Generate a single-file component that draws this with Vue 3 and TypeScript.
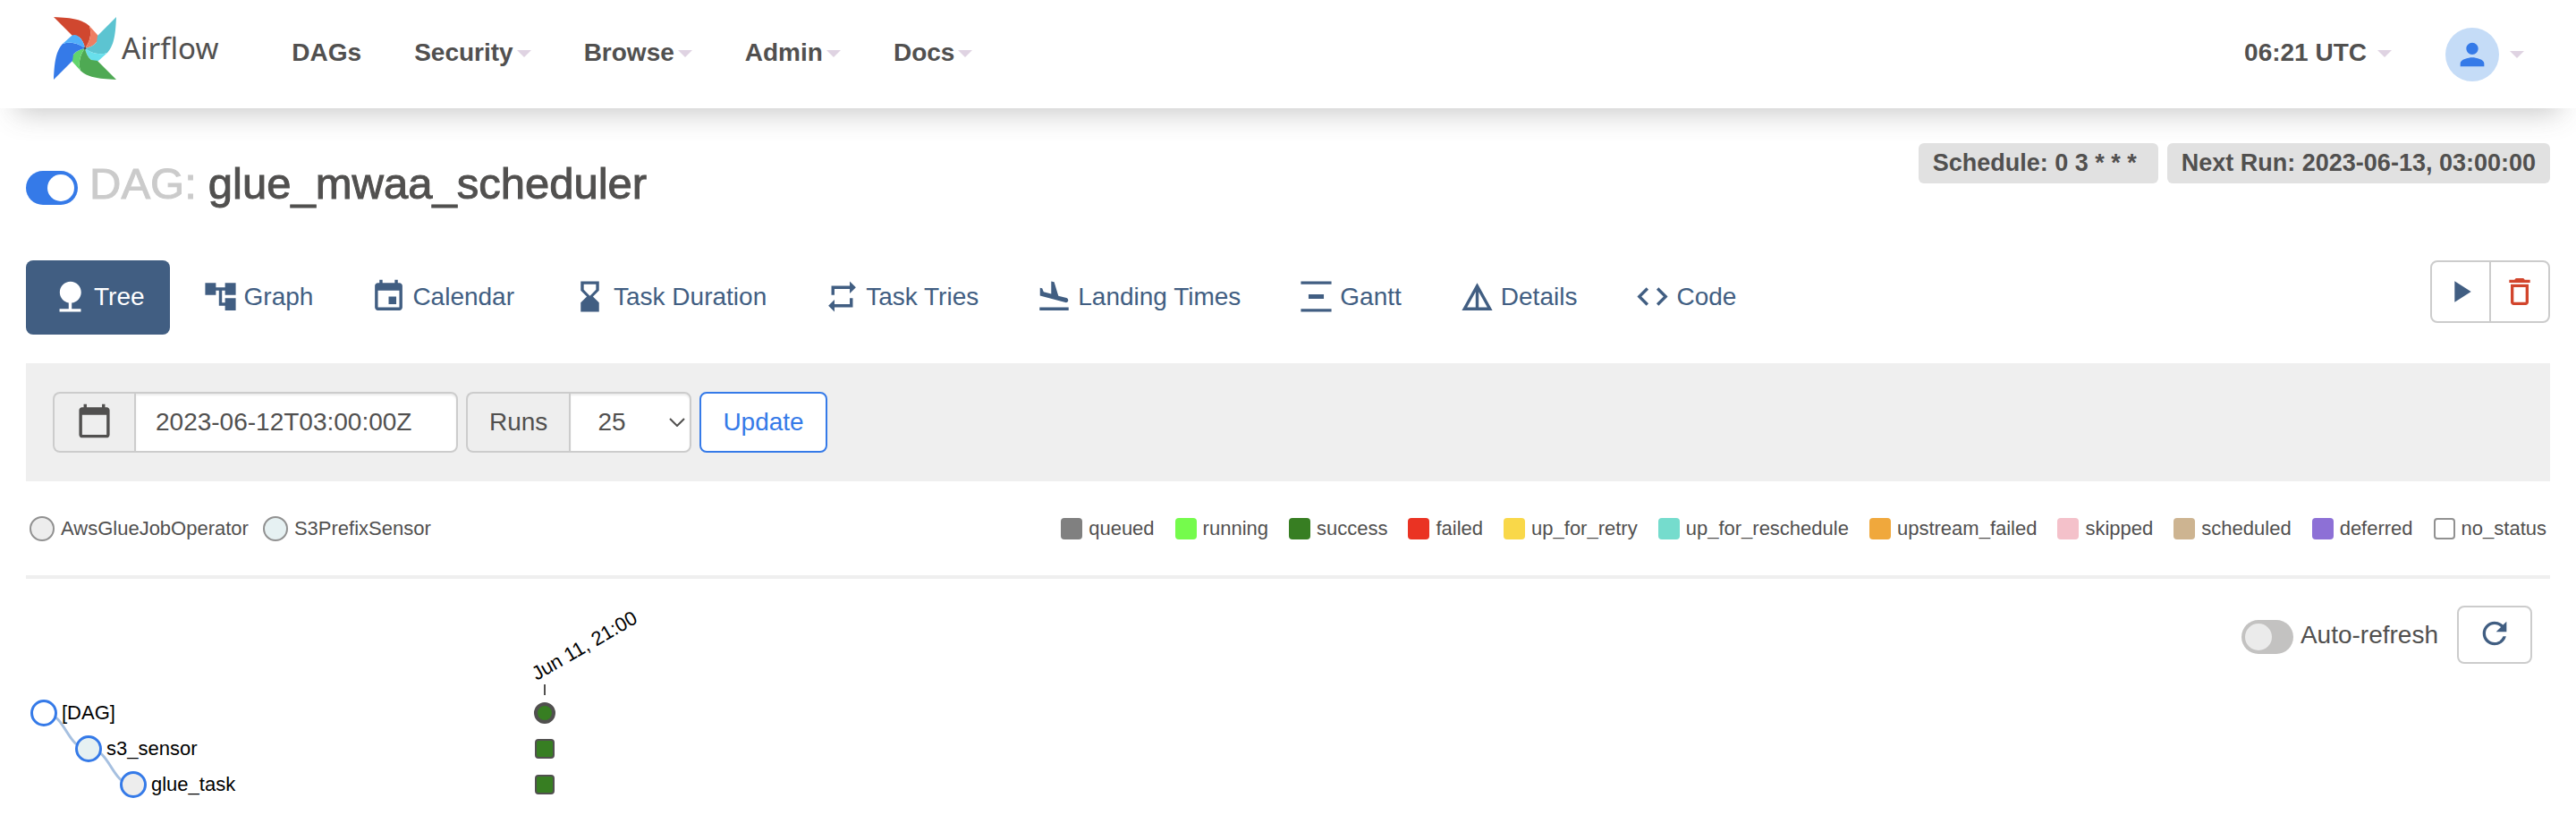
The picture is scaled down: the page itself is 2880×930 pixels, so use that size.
<script setup lang="ts">
import { ref } from 'vue'

interface Tab {
  label: string
  path: string
}

const menus = ['Security', 'Browse', 'Admin', 'Docs']

const blades = [
  { dark: '#d0472f', light: '#ee7e62', turn: 'rotate(0 35 35)' },
  { dark: '#5cc4d1', light: '#68dfec', turn: 'rotate(90 35 35)' },
  { dark: '#4ea953', light: '#62d46c', turn: 'rotate(180 35 35)' },
  { dark: '#357ae8', light: '#52b0fa', turn: 'rotate(270 35 35)' },
]

const tabs: Tab[] = [
  { label: 'Tree', path: 'M13 16.12c3.47-.41 6.17-3.36 6.17-6.95 0-3.87-3.13-7-7-7s-7 3.13-7 7c0 3.47 2.52 6.34 5.83 6.89V20H5v2h14v-2h-6v-3.88z' },
  { label: 'Graph', path: 'M22 11V3h-7v3H9V3H2v8h7V8h2v10h4v3h7v-8h-7v3h-2V8h2v3z' },
  { label: 'Calendar', path: 'M17 12h-5v5h5v-5zM16 1v2H8V1H6v2H5c-1.11 0-1.99.9-1.99 2L3 19c0 1.1.89 2 2 2h14c1.1 0 2-.9 2-2V5c0-1.100-.9-2-2-2h-1V1h-2zm3 18H5V8h14v11z' },
  { label: 'Task Duration', path: 'M18 22l-.01-6L14 12l3.990-4.010L18 2H6v6l4 4-4 3.990V22h12zM8 7.500V4h8v3.500l-4 4-4-4z' },
  { label: 'Task Tries', path: 'M7 7h10v3l4-4-4-4v3H5v6h2V7zm10 10H7v-3l-4 4 4 4v-3h12v-6h-2v4z' },
  { label: 'Landing Times', path: 'M2.500 19h19v2h-19v-2zm16.840-3.150c.8.210 1.620-.26 1.840-1.060.21-.8-.26-1.620-1.060-1.840l-5.310-1.420-2.760-9.020L10.120 2v8.280L5.150 8.950l-.93-2.320-1.450-.39v5.170l16.570 4.440z' },
  { label: 'Gantt', path: 'M22 2v2H2V2h20zM7 10.500v3h10v-3H7zM2 20v2h20v-2H2z' },
  { label: 'Details', path: 'M12 3L2 21h20L12 3zm1 5.920L18.600 19H13V8.920zm-2 0V19H5.400L11 8.920z' },
  { label: 'Code', path: 'M9.400 16.600L4.800 12l4.600-4.600L8 6l-6 6 6 6 1.400-1.400zm5.200 0l4.600-4.600-4.600-4.600L16 6l6 6-6 6-1.400-1.400z' },
]

const operators = [
  { name: 'AwsGlueJobOperator', cls: 'glue' },
  { name: 'S3PrefixSensor', cls: 'sensor' },
]

const states = [
  'queued', 'running', 'success', 'failed', 'up_for_retry', 'up_for_reschedule',
  'upstream_failed', 'skipped', 'scheduled', 'deferred', 'no_status',
]

const dagOn = ref(true)
const autoRefresh = ref(false)
const baseDate = ref('2023-06-12T03:00:00Z')
const runs = ref('25')
</script>

<template>
  <div class="page">
    <header class="navbar">
      <a href="#" class="brand">
        <svg class="pinwheel" viewBox="0 0 70 70" aria-hidden="true">
          <g v-for="b in blades" :key="b.dark" :transform="b.turn">
            <path :fill="b.dark" d="M0 0C22 1 32 3 40 10C43 19 40 29 35 35C34 30 32 25 28 22L21 21Z" />
            <path :fill="b.light" d="M40 10L49 20C51 23 50 26 48 28C45 32 40 34 35 35C40 29 43 19 40 10Z" />
          </g>
          <circle cx="35" cy="35" r="1.400" fill="#51504f" />
        </svg>
        <span class="brand-name">Airflow</span>
      </a>
      <nav class="menu">
        <a href="#" class="menu-item">DAGs</a>
        <a v-for="m in menus" :key="m" href="#" class="menu-item">{{ m }}<span class="caret"></span></a>
      </nav>
      <div class="right-menu">
        <a href="#" class="clock">06:21 UTC<span class="caret"></span></a>
        <a href="#" class="user" aria-label="User menu">
          <span class="avatar">
            <svg viewBox="0 0 24 24" aria-hidden="true"><path d="M12 12c2.210 0 4-1.790 4-4s-1.790-4-4-4-4 1.790-4 4 1.790 4 4 4zm0 2c-2.670 0-8 1.340-8 4v2h16v-2c0-2.660-5.330-4-8-4z" /></svg>
          </span>
          <span class="caret"></span>
        </a>
      </div>
    </header>

    <main>
      <section class="heading">
        <h1>
          <input v-model="dagOn" type="checkbox" class="switch" aria-label="Pause or unpause DAG">
          <span class="muted">DAG:</span>
          <span>glue_mwaa_scheduler</span>
        </h1>
        <div class="labels">
          <a href="#" class="label schedule">Schedule: 0 3 * * *</a>
          <span class="label">Next Run: 2023-06-13, 03:00:00</span>
        </div>
      </section>

      <section class="tab-row">
        <nav class="tabs">
          <a v-for="(t, i) in tabs" :key="t.label" href="#" class="tab" :class="{ active: i === 0 }">
            <svg viewBox="0 0 24 24" aria-hidden="true"><path :d="t.path" /></svg>{{ t.label }}
          </a>
        </nav>
        <div class="actions">
          <button type="button" aria-label="Trigger DAG">
            <svg viewBox="0 0 24 24" aria-hidden="true"><path d="M8 5v14l11-7z" /></svg>
          </button>
          <button type="button" class="danger" aria-label="Delete DAG">
            <svg viewBox="0 0 24 24" aria-hidden="true"><path d="M6 19c0 1.100.9 2 2 2h8c1.100 0 2-.9 2-2V7H6v12zM8 9h8v10H8V9zm7.500-5l-1-1h-5l-1 1H5v2h14V4h-3.500z" /></svg>
          </button>
        </div>
      </section>

      <form class="filter" @submit.prevent>
        <div class="group">
          <label for="base-date" class="addon" aria-label="Base date">
            <svg viewBox="0 0 24 24" aria-hidden="true"><path d="M20 3h-1V1h-2v2H7V1H5v2H4c-1.100 0-2 .9-2 2v16c0 1.100.9 2 2 2h16c1.100 0 2-.9 2-2V5c0-1.100-.9-2-2-2zm0 18H4V8h16v13z" /></svg>
          </label>
          <input id="base-date" v-model="baseDate" type="text" class="field date">
        </div>
        <div class="group">
          <label for="num-runs" class="addon">Runs</label>
          <div class="select-wrap">
            <select id="num-runs" v-model="runs" class="field">
              <option>5</option>
              <option>25</option>
              <option>50</option>
              <option>100</option>
            </select>
            <svg class="chevron" viewBox="0 0 18 10" aria-hidden="true"><path d="M1 1l8 8 8-8" /></svg>
          </div>
        </div>
        <button type="submit" class="update">Update</button>
      </form>

      <section class="legend">
        <ul class="operators">
          <li v-for="o in operators" :key="o.name"><span class="dot" :class="o.cls"></span>{{ o.name }}</li>
        </ul>
        <ul class="states">
          <li v-for="s in states" :key="s"><span class="swatch" :class="s"></span>{{ s }}</li>
        </ul>
      </section>

      <hr>

      <section class="board">
        <svg class="tree" width="760" height="232" viewBox="0 0 760 232" role="img" aria-label="DAG runs tree">
          <g class="links">
            <path d="M20 129C45 129 45 169 70 169" />
            <path d="M70 169C95 169 95 209 120 209" />
          </g>
          <g class="nodes">
            <circle cx="20" cy="129" r="13.500" fill="#fff" />
            <circle cx="70" cy="169" r="13.500" fill="#e6f1f2" />
            <circle cx="120" cy="209" r="13.500" fill="#ededed" />
          </g>
          <text x="40" y="136">[DAG]</text>
          <text x="90" y="176">s3_sensor</text>
          <text x="140" y="216">glue_task</text>
          <text transform="translate(571 93) rotate(-30)">Jun 11, 21:00</text>
          <path class="tick" d="M580 97v12" />
          <circle class="run" cx="580" cy="129" r="10" />
          <rect class="task" x="570" y="159" width="20" height="20" rx="3" />
          <rect class="task" x="570" y="199" width="20" height="20" rx="3" />
        </svg>
        <div class="refresh">
          <label class="auto"><input v-model="autoRefresh" type="checkbox" class="switch">Auto-refresh</label>
          <button type="button" aria-label="Refresh">
            <svg viewBox="0 0 24 24" aria-hidden="true"><path d="M17.650 6.350C16.200 4.900 14.210 4 12 4c-4.420 0-7.990 3.580-7.990 8s3.570 8 7.990 8c3.730 0 6.840-2.550 7.730-6h-2.080c-.82 2.330-3.040 4-5.650 4-3.310 0-6-2.690-6-6s2.690-6 6-6c1.660 0 3.140.69 4.220 1.780L13 11h7V4l-2.350 2.350z" /></svg>
          </button>
        </div>
      </section>
    </main>
  </div>
</template>

<style>
body {
  margin: 0;
  background: #fff;
}
</style>

<style scoped>
.page {
  font-family: "Liberation Sans", Arial, Helvetica, sans-serif;
  font-size: 28px;
  line-height: 40px;
  color: #51504f;
}

.page *,
.page *::before {
  box-sizing: border-box;
}

a {
  color: inherit;
  text-decoration: none;
}

svg {
  display: block;
  fill: currentColor;
}

button,
input,
select {
  font: inherit;
  color: inherit;
  margin: 0;
}

ul {
  display: flex;
  list-style: none;
  margin: 0;
  padding: 0;
}

.navbar {
  display: flex;
  align-items: center;
  height: 121px;
  padding: 0 58px 0 60px;
  background: #fff;
  box-shadow: 0 24px 30px -18px rgba(81, 80, 79, 0.3);
}

.brand {
  display: flex;
  align-items: center;
  gap: 6px;
  margin: 0 53px 14px 0;
}

.pinwheel {
  width: 70px;
  height: 70px;
}

.brand-name {
  font-family: "Noto Sans", "Open Sans", sans-serif;
  font-size: 33px;
}

.menu {
  display: flex;
  margin-bottom: 4px;
  font-weight: 700;
}

.menu-item {
  padding: 0 30px 0 29px;
}

.caret {
  display: inline-block;
  margin-left: 4px;
  vertical-align: middle;
  border: 8px solid transparent;
  border-top-color: #dfd3e2;
  border-bottom-width: 0;
}

.right-menu {
  display: flex;
  align-items: center;
  gap: 60px;
  margin-left: auto;
  font-weight: 700;
}

.right-menu .caret {
  margin-left: 12px;
}

.clock {
  margin-bottom: 4px;
}

.user {
  display: flex;
  align-items: center;
}

.avatar {
  display: grid;
  place-items: center;
  width: 60px;
  height: 60px;
  border-radius: 50%;
  background: #c5dcf7;
  color: #357ae8;
}

.avatar svg {
  width: 40px;
  height: 40px;
}

main {
  padding: 39px 29px 0;
}

.heading {
  display: flex;
  justify-content: space-between;
  align-items: flex-start;
}

h1 {
  display: flex;
  align-items: center;
  gap: 13px;
  margin: 22px 0 0;
  font-size: 49px;
  font-weight: 400;
  line-height: 46px;
  -webkit-text-stroke: 1px currentColor;
}

h1 span {
  padding-bottom: 10px;
}

.muted {
  color: #cbcbcb;
}

.switch {
  appearance: none;
  display: flex;
  align-items: center;
  flex: none;
  width: 58px;
  height: 38px;
  padding: 4px;
  border-radius: 19px;
  background: #c3c2c1;
}

.switch::before {
  content: "";
  width: 30px;
  height: 30px;
  border-radius: 50%;
  background: #ebebeb;
}

.switch:checked {
  justify-content: flex-end;
  background: #357ae8;
}

.switch:checked::before {
  background: #fff;
}

.labels {
  display: flex;
  gap: 10px;
}

.label {
  padding: 0 16px;
  border-radius: 6px;
  background: #e1e1e1;
  font-size: 27px;
  font-weight: 700;
  line-height: 45px;
}

.schedule {
  padding-right: 24px;
}

.tab-row {
  display: flex;
  justify-content: space-between;
  align-items: flex-start;
  margin-top: 53px;
}

.tabs {
  display: flex;
  gap: 7px;
}

.tab {
  display: flex;
  align-items: center;
  gap: 6px;
  padding: 20px 28px 22px 29px;
  border-radius: 8px;
  color: #415e82;
}

.tab svg {
  width: 41px;
  height: 41px;
}

.tab.active {
  background: #415e82;
  color: #fff;
}

.actions {
  display: flex;
}

button {
  border: 2px solid #ccc;
  border-radius: 8px;
  background: #fff;
  color: #415e82;
}

.actions button {
  width: 68px;
  height: 70px;
  padding: 0 12px;
}

.actions button:first-child {
  border-radius: 8px 0 0 8px;
}

.actions button:last-child {
  margin-left: -2px;
  border-radius: 0 8px 8px 0;
}

.actions svg,
.refresh svg {
  width: 40px;
  height: 40px;
}

.actions .danger {
  color: #d2452c;
}

.filter {
  display: flex;
  gap: 9px;
  margin-top: 32px;
  padding: 32px 30px;
  background: #efefef;
}

.group {
  display: flex;
  height: 68px;
}

.addon {
  display: flex;
  align-items: center;
  padding: 0 24px;
  border: 2px solid #ccc;
  border-right: 0;
  border-radius: 8px 0 0 8px;
  background: #eee;
}

.addon svg {
  width: 41px;
  height: 41px;
  margin-bottom: 4px;
}

.field {
  height: 68px;
  border: 2px solid #ccc;
  border-radius: 0 8px 8px 0;
  background: #fff;
  box-shadow: inset 0 2px 2px rgba(0, 0, 0, 0.075);
}

.date {
  width: 362px;
  padding: 0 22px;
}

.select-wrap {
  display: grid;
  align-items: center;
}

.select-wrap > * {
  grid-area: 1 / 1;
}

select.field {
  appearance: none;
  width: 137px;
  padding: 0 30px;
}

.chevron {
  justify-self: end;
  width: 18px;
  height: 10px;
  margin-right: 7px;
  fill: none;
  stroke: currentColor;
  stroke-width: 2;
  pointer-events: none;
}

.update {
  padding: 0 24px;
  border-color: #357ae8;
  color: #357ae8;
}

.legend {
  display: flex;
  justify-content: space-between;
  align-items: center;
  height: 105px;
  padding: 0 4px;
  font-size: 22px;
}

.legend li {
  display: flex;
  align-items: center;
  gap: 7px;
}

.operators {
  gap: 16px;
}

.states {
  gap: 23px;
}

.dot {
  width: 28px;
  height: 28px;
  border: 2px solid #919191;
  border-radius: 50%;
}

.glue { background: #ededed; }
.sensor { background: #e6f1f2; }

.swatch {
  width: 24px;
  height: 24px;
  border-radius: 4px;
}

.queued { background: #808080; }
.running { background: #75fb4c; }
.success { background: #377e22; }
.failed { background: #ea3323; }
.up_for_retry { background: #f9d849; }
.up_for_reschedule { background: #75dccd; }
.upstream_failed { background: #f0a83c; }
.skipped { background: #f4c1ca; }
.scheduled { background: #cdb491; }
.deferred { background: #8d70d6; }
.no_status { border: 2px solid #919191; background: #fff; }

hr {
  height: 4px;
  margin: 0;
  border: 0;
  background: #efefef;
}

.board {
  display: flex;
  justify-content: space-between;
  align-items: flex-start;
}

.tree {
  margin-top: 21px;
  font-size: 22px;
  fill: #000;
}

.links path {
  fill: none;
  stroke: #a6c0e0;
  stroke-width: 3;
}

.nodes circle {
  stroke: #357ae8;
  stroke-width: 3;
}

.tick {
  stroke: #51504f;
  stroke-width: 2;
}

.run,
.task {
  fill: #377e22;
  stroke: #51504f;
  stroke-width: 2;
}

.run {
  stroke-width: 4;
}

.refresh {
  display: flex;
  align-items: center;
  gap: 21px;
  margin: 30px 20px 0 0;
}

.auto {
  display: flex;
  align-items: center;
  gap: 8px;
}

.auto .switch {
  margin-top: 4px;
}

.refresh button {
  width: 84px;
  height: 65px;
  padding: 0 20px 4px;
}
</style>
